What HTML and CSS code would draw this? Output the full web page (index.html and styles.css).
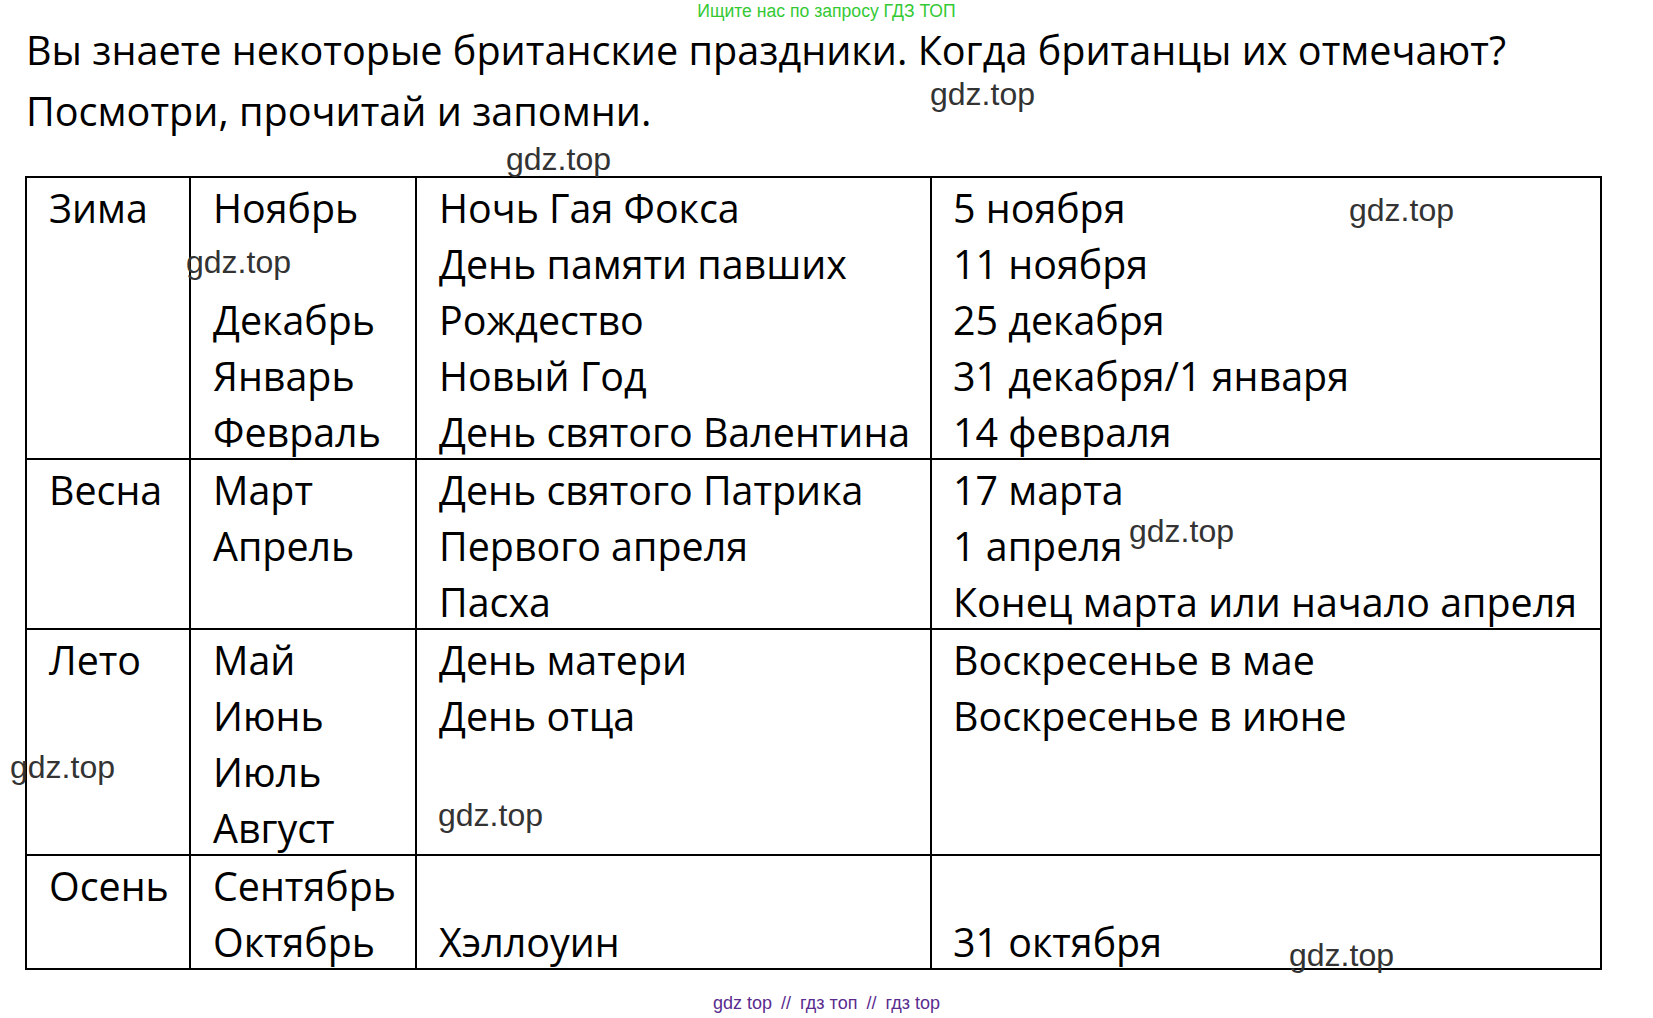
FILE: index.html
```html
<!DOCTYPE html>
<html lang="ru">
<head>
<meta charset="utf-8">
<title>Британские праздники</title>
<link rel="stylesheet" href="styles.css">
</head>
<body>
<div class="page">
  <div class="top-note">Ищите нас по запросу ГДЗ ТОП</div>
  <h1 class="title">Вы знаете некоторые британские праздники. Когда британцы их отмечают?<br>Посмотри, прочитай и запомни.</h1>

  <div class="table">
    <div class="cell"><div class="ln">Зима</div></div>
    <div class="cell">
      <div class="ln">Ноябрь</div>
      <div class="ln"></div>
      <div class="ln">Декабрь</div>
      <div class="ln">Январь</div>
      <div class="ln">Февраль</div>
    </div>
    <div class="cell">
      <div class="ln">Ночь Гая Фокса</div>
      <div class="ln">День памяти павших</div>
      <div class="ln">Рождество</div>
      <div class="ln">Новый Год</div>
      <div class="ln">День святого Валентина</div>
    </div>
    <div class="cell cell-date">
      <div class="ln">5 ноября</div>
      <div class="ln">11 ноября</div>
      <div class="ln">25 декабря</div>
      <div class="ln">31 декабря/1 января</div>
      <div class="ln">14 февраля</div>
    </div>

    <div class="cell"><div class="ln">Весна</div></div>
    <div class="cell">
      <div class="ln">Март</div>
      <div class="ln">Апрель</div>
    </div>
    <div class="cell">
      <div class="ln">День святого Патрика</div>
      <div class="ln">Первого апреля</div>
      <div class="ln">Пасха</div>
    </div>
    <div class="cell cell-date">
      <div class="ln">17 марта</div>
      <div class="ln">1 апреля</div>
      <div class="ln">Конец марта или начало апреля</div>
    </div>

    <div class="cell"><div class="ln">Лето</div></div>
    <div class="cell">
      <div class="ln">Май</div>
      <div class="ln">Июнь</div>
      <div class="ln">Июль</div>
      <div class="ln">Август</div>
    </div>
    <div class="cell">
      <div class="ln">День матери</div>
      <div class="ln">День отца</div>
    </div>
    <div class="cell cell-date">
      <div class="ln">Воскресенье в мае</div>
      <div class="ln">Воскресенье в июне</div>
    </div>

    <div class="cell"><div class="ln">Осень</div></div>
    <div class="cell">
      <div class="ln">Сентябрь</div>
      <div class="ln">Октябрь</div>
    </div>
    <div class="cell">
      <div class="ln"></div>
      <div class="ln">Хэллоуин</div>
    </div>
    <div class="cell cell-date">
      <div class="ln"></div>
      <div class="ln">31 октября</div>
    </div>
  </div>

  <div class="bottom-note">gdz top <span class="sep">//</span> гдз топ <span class="sep">//</span> гдз top</div>

  <span class="wm wm1">gdz.top</span>
  <span class="wm wm2">gdz.top</span>
  <span class="wm wm3">gdz.top</span>
  <span class="wm wm4">gdz.top</span>
  <span class="wm wm5">gdz.top</span>
  <span class="wm wm6">gdz.top</span>
  <span class="wm wm7">gdz.top</span>
  <span class="wm wm8">gdz.top</span>
</div>
</body>
</html>
```

FILE: styles.css
```css
html, body {
  margin: 0;
  padding: 0;
  background: #ffffff;
}

body {
  font-family: "Open Sans", "Noto Sans", sans-serif;
  color: #000;
}

.page {
  position: relative;
  width: 1653px;
  height: 1018px;
  overflow: hidden;
}

.top-note {
  height: 20px;
  font-family: "Liberation Sans", Arial, sans-serif;
  font-size: 17.6px;
  line-height: 22px;
  text-align: center;
  color: #33c933;
}

.title {
  margin: 0 0 0 26px;
  font-size: 39.6px;
  font-weight: 400;
  line-height: 61px;
  white-space: nowrap;
}

.table {
  display: grid;
  grid-template-columns: 164px 226px 515px 670px;
  width: max-content;
  margin: 34px 0 0 25px;
  border-top: 2px solid #000;
  border-left: 2px solid #000;
}

.cell {
  border-right: 2px solid #000;
  border-bottom: 2px solid #000;
  padding-left: 22px;
  font-size: 39.4px;
  white-space: nowrap;
}

.cell-date {
  padding-left: 21px;
}

.ln {
  height: 56px;
  line-height: 60px;
}

.bottom-note {
  margin-top: 23px;
  font-family: "Liberation Sans", Arial, sans-serif;
  font-size: 18px;
  line-height: 20px;
  text-align: center;
  color: #5b2c8f;
}

.sep {
  margin: 0 4px;
}

.wm {
  position: absolute;
  font-family: "Liberation Sans", Arial, sans-serif;
  font-size: 32px;
  line-height: 1;
  color: #333;
  white-space: nowrap;
}

.wm1 { left: 930px;  top: 78px; }
.wm2 { left: 506px;  top: 143px; }
.wm3 { left: 1349px; top: 194px; }
.wm4 { left: 186px;  top: 246px; }
.wm5 { left: 1129px; top: 515px; }
.wm6 { left: 10px;   top: 751px; }
.wm7 { left: 438px;  top: 799px; }
.wm8 { left: 1289px; top: 939px; }
```
